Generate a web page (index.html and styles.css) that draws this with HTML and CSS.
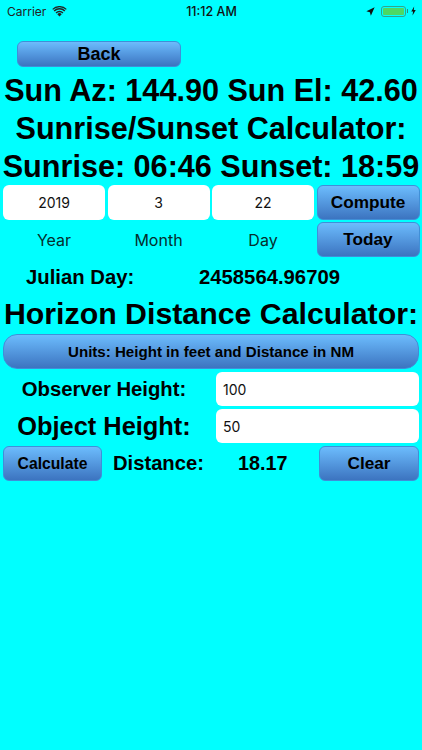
FILE: index.html
```html
<!DOCTYPE html>
<html lang="en">
<head>
<meta charset="utf-8">
<title>Sun Calculator</title>
<link rel="stylesheet" href="styles.css">
</head>
<body>
<div class="status">
  <div class="status-left">
    <span>Carrier</span>
    <svg class="wifi" viewBox="0 0 16 12" width="15" height="11"><path d="M8 11.5 5.6 8.9a3.4 3.4 0 0 1 4.8 0Z" fill="#222"/><path d="M3.7 7a6.1 6.1 0 0 1 8.6 0l-1.1 1.2a4.5 4.5 0 0 0-6.4 0Z" fill="#222"/><path d="M1.6 4.8a9.1 9.1 0 0 1 12.8 0l-1.2 1.2a7.4 7.4 0 0 0-10.4 0Z" fill="#222"/><path d="M.1 3.2a11.3 11.3 0 0 1 15.8 0l-.9.9a10 10 0 0 0-14 0Z" fill="#222"/></svg>
  </div>
  <div class="status-time">11:12 AM</div>
  <div class="status-right">
    <svg viewBox="0 0 10 10" width="9" height="9"><path d="M9.6.4 5.4 9.6 4.3 5.7.4 4.6Z" fill="#111"/></svg>
    <div class="battery"><div class="battery-fill"></div></div>
    <div class="battery-cap"></div>
    <svg viewBox="0 0 6 11" width="5" height="10"><path d="M3.8 0 .3 6.2h2.2L1.8 11l3.9-6.6H3.3Z" fill="#111"/></svg>
  </div>
</div>

<button class="btn btn-back">Back</button>

<div class="title">Sun Az: 144.90 Sun El: 42.60</div>
<div class="title">Sunrise/Sunset Calculator:</div>
<div class="title">Sunrise: 06:46 Sunset: 18:59</div>

<div class="date-grid">
  <div class="field center">2019</div>
  <div class="field center">3</div>
  <div class="field center">22</div>
  <button class="btn btn-compute">Compute</button>
  <div class="date-label">Year</div>
  <div class="date-label">Month</div>
  <div class="date-label">Day</div>
  <button class="btn btn-compute">Today</button>
</div>

<div class="julian">
  <span class="julian-label">Julian Day:</span>
  <span>2458564.96709</span>
</div>

<div class="title horizon">Horizon Distance Calculator:</div>

<button class="btn btn-units">Units: Height in feet and Distance in NM</button>

<div class="height-row">
  <div class="height-label observer">Observer Height:</div>
  <div class="field">100</div>
</div>
<div class="height-row">
  <div class="height-label object">Object Height:</div>
  <div class="field">50</div>
</div>

<div class="calc-row">
  <button class="btn btn-calc">Calculate</button>
  <span class="dist-label">Distance:</span>
  <span class="dist-value">18.17</span>
  <button class="btn btn-clear">Clear</button>
</div>
</body>
</html>
```
FILE: styles.css
```css
* { box-sizing: border-box; }
html, body { margin: 0; padding: 0; }
body {
  width: 422px;
  height: 750px;
  overflow: hidden;
  background: #00ffff;
  color: #000;
  font-family: "Liberation Sans", Arial, sans-serif;
  font-weight: 700;
}
.status {
  height: 22px;
  display: grid;
  grid-template-columns: 1fr auto 1fr;
  align-items: center;
  padding: 0 6px 0 7px;
  font-family: Inter, "Liberation Sans", sans-serif;
  font-weight: 400;
  font-size: 12px;
  color: #111;
}
.status-left { display: flex; align-items: center; gap: 6px; color: #222; }
.status-time { font-weight: 500; font-size: 12.5px; }
.status-right { display: flex; align-items: center; justify-content: flex-end; }
.battery {
  width: 25px;
  height: 11px;
  margin-left: 6px;
  border: 1px solid #33a58a;
  border-radius: 3px;
  padding: 1px;
}
.battery-fill { height: 100%; background: #4cd964; border-radius: 1px; }
.battery-cap { width: 1px; height: 4px; background: #2a8f80; margin: 0 3px 0 1px; }
.btn {
  display: block;
  padding: 0;
  border: 1px solid #3f8fd8;
  border-radius: 6px;
  background: linear-gradient(#6cbcfd, #3c74c0);
  color: #000;
  font-family: "Liberation Sans", Arial, sans-serif;
  font-weight: 700;
  font-size: 17.2px;
}
.btn-back {
  width: 164px;
  height: 26px;
  margin: 19px 0 4px 17px;
  font-size: 18px;
}
.title {
  height: 38px;
  line-height: 38px;
  font-size: 30.6px;
  text-align: center;
  white-space: nowrap;
}
.date-grid {
  display: grid;
  grid-template-columns: 102px 102px 102px 103px;
  grid-template-rows: 35px 35px;
  column-gap: 2.5px;
  row-gap: 2px;
  margin: 0 2px 0 3px;
}
.field {
  background: #fff;
  border-radius: 6px;
  font-family: Inter, "Liberation Sans", sans-serif;
  font-weight: 400;
  font-size: 14px;
  color: #111;
  display: flex;
  align-items: center;
  padding-left: 7px;
}
.center { justify-content: center; padding-left: 0; }
.date-label {
  display: flex;
  align-items: center;
  justify-content: center;
  font-family: Inter, "Liberation Sans", sans-serif;
  font-weight: 400;
  font-size: 16px;
  color: #052e2e;
}
.julian {
  height: 40px;
  display: flex;
  align-items: center;
  font-size: 20.3px;
}
.julian-label { margin-left: 26px; width: 173px; }
.horizon { height: 36px; line-height: 34px; font-size: 30.3px; }
.btn-units {
  width: 416px;
  height: 35px;
  margin: 1px 0 3px 3px;
  border-radius: 14px;
  font-size: 15.1px;
}
.height-row {
  display: grid;
  grid-template-columns: 202px 203px;
  column-gap: 11px;
  height: 34px;
  margin: 0 0 3px 3px;
}
.height-label { display: flex; align-items: center; justify-content: center; }
.observer { font-size: 20.3px; }
.object { font-size: 25.4px; }
.calc-row {
  display: flex;
  align-items: center;
  height: 35px;
  margin-left: 3px;
}
.btn-calc { width: 99px; height: 35px; font-size: 15.7px; }
.dist-label { margin-left: 11px; width: 125px; font-size: 20.2px; }
.dist-value { width: 81px; font-size: 19.8px; }
.btn-clear { width: 100px; height: 35px; }
```
